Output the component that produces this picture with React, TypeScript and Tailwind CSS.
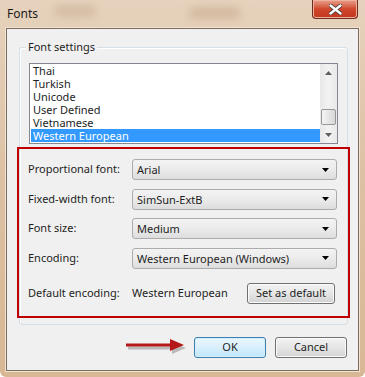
import React from 'react';

const font = { fontFamily: '"Noto Sans", "Open Sans", sans-serif' };

const items = ['Thai', 'Turkish', 'Unicode', 'User Defined', 'Vietnamese', 'Western European'];

function Combo({ value }: { value: string }) {
    return (
        <div className="w-[205px] h-[21px] rounded-[3px] border border-[#acacac] bg-gradient-to-b from-[#f3f3f3] via-[#ebebeb] to-[#dddddd] flex items-center pl-[4px] pr-[7px] text-[11px] text-[#1e1e1e]">
            <span className="flex-1 leading-none">{value}</span>
            <svg width="7" height="4" viewBox="0 0 7 4"><path d="M0 0h7L3.5 4z" fill="#000" /></svg>
        </div>
    );
}

function Row({ label, value }: { label: string; value: string }) {
    return (
        <div className="flex items-center h-[21px]">
            <span className="w-[104px] text-[11px] text-[#1e1e1e]">{label}</span>
            <Combo value={value} />
        </div>
    );
}

function Button({ children, primary, className = '' }: { children: React.ReactNode; primary?: boolean; className?: string }) {
    return (
        <div
            className={
                'h-[21px] rounded-[3px] border flex items-center justify-center text-[11px] text-[#1e1e1e] ' +
                (primary
                    ? 'border-[#3c7fb1] bg-gradient-to-b from-[#eaf6fd] via-[#d9f0fc] to-[#bee6fd] shadow-[inset_0_0_0_1px_#d6eefb] '
                    : 'border-[#707070] bg-gradient-to-b from-[#f2f2f2] via-[#e6e6e6] to-[#d2d2d2] shadow-[inset_0_0_0_1px_#fbfbfb] ') +
                className
            }
        >
            {children}
        </div>
    );
}

export default function App() {
    return (
        <div className="w-[365px] h-[377px] overflow-hidden bg-white" style={font}>
            <div className="relative w-[365px] h-[377px] rounded-b-[6px] bg-gradient-to-b from-[#e6d2bd] via-[#dcc0a2] to-[#d8b894] flex flex-col">
                {/* blurred background hints */}
                <div className="absolute left-[55px] top-[6px] w-[40px] h-[10px] bg-[#c9ad92] blur-[5px] opacity-70" />
                <div className="absolute left-[190px] top-[8px] w-[50px] h-[10px] bg-[#c6a98c] blur-[5px] opacity-70" />

                {/* title bar */}
                <div className="h-[28px] flex items-center pl-[7px] relative">
                    <span className="text-[12px] text-[#1a1a1a] -mt-[1px]">Fonts</span>
                    <div className="absolute right-[7px] top-0 w-[46px] h-[19px] rounded-b-[4px] border border-t-0 border-[#6e2c1c] bg-gradient-to-b from-[#e8a08c] via-[#d0472c] to-[#c3361c] flex items-center justify-center shadow-[inset_0_0_0_1px_#f0b2a0]">
                        <svg width="13" height="11" viewBox="0 0 13 11">
                            <path d="M1.5 1.5l10 8M11.5 1.5l-10 8" stroke="#3a3a3a" strokeWidth="4" strokeLinecap="round" />
                            <path d="M1.5 1.5l10 8M11.5 1.5l-10 8" stroke="#fff" strokeWidth="2.4" strokeLinecap="round" />
                        </svg>
                    </div>
                </div>

                {/* client area */}
                <div className="mx-[6px] h-[343px] border border-[#7d6c5c] shadow-[0_0_0_1px_#f2e4d4] bg-[#f0f0f0] relative flex flex-col">
                    {/* group box */}
                    <div className="relative mt-[18px] ml-[12px] mr-[10px] h-[278px] border border-[#d5dfe5] rounded-[3px] shadow-[inset_1px_1px_0_#fff] px-[9px] pt-[15px]">
                        <span className="absolute left-[6px] -top-[9px] px-[2px] bg-[#f0f0f0] text-[11px] text-[#1e1e1e] leading-[16px]">Font settings</span>

                        {/* list box */}
                        <div className="h-[81px] border border-[#828790] bg-white flex">
                            <div className="flex-1 flex flex-col justify-end pb-[1px] pl-[1px]">
                                {items.map((it, i) => (
                                    <div
                                        key={it}
                                        className={
                                            'h-[13px] leading-[13px] text-[11px] pl-[2px] ' +
                                            (i === items.length - 1 ? 'bg-[#3399ff] text-white' : 'text-[#1e1e1e]')
                                        }
                                    >
                                        {it}
                                    </div>
                                ))}
                            </div>
                            <div className="w-[17px] bg-gradient-to-r from-[#e8e8e8] via-[#f2f2f2] to-[#e8e8e8] flex flex-col items-center">
                                <div className="h-[17px] flex items-center justify-center">
                                    <svg width="7" height="4" viewBox="0 0 7 4"><path d="M3.5 0L7 4H0z" fill="#606060" /></svg>
                                </div>
                                <div className="flex-1 w-full relative">
                                    <div className="absolute left-[1px] right-[1px] bottom-[1px] h-[16px] rounded-[2px] border border-[#979797] bg-gradient-to-r from-[#f4f4f4] to-[#d8d8d8]" />
                                </div>
                                <div className="h-[17px] flex items-center justify-center">
                                    <svg width="7" height="4" viewBox="0 0 7 4"><path d="M0 0h7L3.5 4z" fill="#606060" /></svg>
                                </div>
                            </div>
                        </div>

                        {/* settings rows */}
                        <div className="mt-[15px] flex flex-col gap-[8.5px] -ml-[1px]">
                            <Row label="Proportional font:" value="Arial" />
                            <Row label="Fixed-width font:" value="SimSun-ExtB" />
                            <Row label="Font size:" value="Medium" />
                            <Row label="Encoding:" value="Western European (Windows)" />
                        </div>
                        <div className="mt-[14px] flex items-center h-[21px] -ml-[1px] text-[11px] text-[#1e1e1e]">
                            <span className="w-[104px]">Default encoding:</span>
                            <span className="w-[115px]">Western European</span>
                            <Button className="w-[88px]">Set as default</Button>
                        </div>
                    </div>

                    {/* red annotation box */}
                    <div className="absolute left-[10px] top-[118px] w-[333px] h-[171px] border-2 border-[#c00000]" />

                    {/* buttons */}
                    <div className="mt-[12px] mr-[11px] flex justify-end gap-[9px]">
                        <Button primary className="w-[72px]">OK</Button>
                        <Button className="w-[72px]">Cancel</Button>
                    </div>

                    {/* red arrow annotation */}
                    <svg className="absolute left-[117px] top-[309px]" width="66" height="16" viewBox="0 0 66 16">
                        <g opacity="0.35" transform="translate(2,3)">
                            <path d="M2 7h46" stroke="#555" strokeWidth="3" />
                            <path d="M46 1l14 6-14 6z" fill="#555" />
                        </g>
                        <path d="M2 7h46" stroke="#b51818" strokeWidth="3" />
                        <path d="M46 1l14 6-14 6z" fill="#b51818" />
                    </svg>
                </div>
            </div>
        </div>
    );
}
